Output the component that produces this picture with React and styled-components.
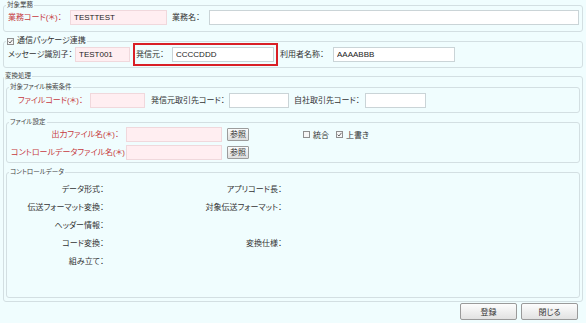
import styled, { createGlobalStyle } from "styled-components";

const GlobalStyle = createGlobalStyle`
  html, body { margin: 0; padding: 0; background: #f0fdfe; }
  body {
    font-family: "Liberation Sans", "Noto Sans CJK JP", sans-serif;
    font-size: 8px;
    color: #333;
    font-feature-settings: "palt";
  }
  * { box-sizing: border-box; }
`;

const controlRows = [
  ["データ形式：", "アプリコード長："],
  ["伝送フォーマット変換：", "対象伝送フォーマット："],
  ["ヘッダー情報：", ""],
  ["コード変換：", "変換仕様："],
  ["組み立て：", ""],
];

function Check({ checked }) {
  return (
    <Box>
      {checked && (
        <svg width="5" height="5" viewBox="0 0 5 5">
          <path d="M0.6 2.6 L2 4 L4.5 0.8" fill="none" stroke="#555" strokeWidth="0.9" />
        </svg>
      )}
    </Box>
  );
}

export default function App() {
  return (
    <Page>
      <GlobalStyle />
      <Group $pad="0 3px 6px 4px">
        <Legend>対象業務</Legend>
        <Row>
          <Label $w={62} $req>業務コード(＊)：</Label>
          <Field $w={97} $req readOnly value="TESTTEST" />
          <Label $w={37} $ml={5}>業務名：</Label>
          <Field readOnly value="" />
        </Row>
      </Group>

      <Group $mt={4} $pad="1px 3px 5px 4px">
        <Legend $big>
          <Check checked />
          通信パッケージ連携
        </Legend>
        <Row>
          <Label $w={67}>メッセージ識別子：</Label>
          <Field $w={55} $req readOnly value="TEST001" />
          <Highlight>
            <Label $w={36}>発信元：</Label>
            <Field $w={102} readOnly value="CCCCDDD" />
          </Highlight>
          <Label $w={53} $ml={2}>利用者名称：</Label>
          <Field $w={122} readOnly value="AAAABBB" />
        </Row>
      </Group>

      <Group $mt={3} $pad="1px 2px 3px 2px">
        <Legend>変換処理</Legend>

        <Group $pad="1px 3px 4px 4px">
          <Legend>対象ファイル検索条件</Legend>
          <Row>
            <Label $w={79} $right $req>ファイルコード(＊)：</Label>
            <Field $w={55} $req readOnly value="" />
            <Label $w={78} $ml={6}>発信元取引先コード：</Label>
            <Field $w={60} readOnly value="" />
            <Label $w={71} $ml={5}>自社取引先コード：</Label>
            <Field $w={61} readOnly value="" />
          </Row>
        </Group>

        <Group $mt={4} $pad="0 3px 2px 4px">
          <Legend>ファイル設定</Legend>
          <Stack>
            <Row>
              <Label $w={115} $right $req>出力ファイル名(＊)：</Label>
              <Field $w={96} $req readOnly value="" />
              <SmallButton>参照</SmallButton>
              <Options>
                <Option><Check />統合</Option>
                <Option><Check checked />上書き</Option>
              </Options>
            </Row>
            <Row>
              <Label $w={115} $right $req>コントロールデータファイル名(＊)：</Label>
              <Field $w={96} $req readOnly value="" />
              <SmallButton>参照</SmallButton>
            </Row>
          </Stack>
        </Group>

        <Group $mt={4} $pad="2px 3px 28px 4px">
          <Legend>コントロールデータ</Legend>
          <DataGrid>
            {controlRows.map(([a, b]) => [
              <GridLabel key={a}>{a}</GridLabel>,
              <span key={a + "-v1"} />,
              <GridLabel key={a + "-l2"}>{b}</GridLabel>,
              <span key={a + "-v2"} />,
            ])}
          </DataGrid>
        </Group>
      </Group>

      <Footer>
        <Button>登録</Button>
        <Button>閉じる</Button>
      </Footer>
    </Page>
  );
}

const Page = styled.div`
  width: 586px;
  height: 323px;
  padding: 0 3px;
  background: #f0fdfe;
  overflow: hidden;
`;

const Group = styled.fieldset`
  margin: ${(p) => p.$mt || 0}px 0 0;
  padding: ${(p) => p.$pad};
  border: 1px solid #d3dfe2;
  border-radius: 3px;
  min-width: 0;
`;

const Legend = styled.legend`
  display: flex;
  align-items: center;
  gap: 3px;
  margin-left: -2px;
  padding: 0 1px;
  font-size: ${(p) => (p.$big ? 8 : 6.5)}px;
  line-height: 10px;
  color: ${(p) => (p.$big ? "#333" : "#444")};
  white-space: nowrap;
`;

const Row = styled.div`
  display: flex;
  align-items: center;
  height: 15px;
`;

const Stack = styled.div`
  display: flex;
  flex-direction: column;
  gap: 3px;
`;

const Label = styled.span`
  flex: none;
  width: ${(p) => p.$w}px;
  margin-left: ${(p) => p.$ml || 0}px;
  padding-right: ${(p) => (p.$right ? 7 : 0)}px;
  text-align: ${(p) => (p.$right ? "right" : "left")};
  color: ${(p) => (p.$req ? "#c63a3e" : "#333")};
  line-height: 15px;
  white-space: nowrap;
`;

const Field = styled.input`
  flex: ${(p) => (p.$w ? "none" : "1")};
  width: ${(p) => (p.$w ? `${p.$w}px` : "auto")};
  min-width: 0;
  height: 15px;
  margin: 0;
  padding: 0 3px;
  border: 1px solid ${(p) => (p.$req ? "#f0d8dc" : "#cad4d7")};
  background: ${(p) => (p.$req ? "#ffeef1" : "#fff")};
  font: 8px "Liberation Sans", sans-serif;
  color: #222;
  outline: none;
`;

const Highlight = styled.div`
  display: flex;
  align-items: center;
  margin: -4px 0 -4px 3px;
  padding: 2px 2px 2px 1px;
  border: 2px solid #d91f26;
`;

const SmallButton = styled.button`
  flex: none;
  width: 22px;
  height: 13px;
  margin-left: 5px;
  padding: 0;
  border: 1px solid #9c9c9c;
  border-radius: 1px;
  background: linear-gradient(#fbfbfb, #dedede);
  font: 8px "Liberation Sans", "Noto Sans CJK JP", sans-serif;
  font-feature-settings: "palt";
  color: #333;
  line-height: 11px;
`;

const Options = styled.div`
  display: flex;
  align-items: center;
  gap: 7px;
  margin-left: 54px;
`;

const Option = styled.span`
  display: flex;
  align-items: center;
  gap: 3px;
`;

const Box = styled.span`
  flex: none;
  display: inline-flex;
  align-items: center;
  justify-content: center;
  width: 7px;
  height: 7px;
  border: 1px solid #8f8f8f;
  background: #f6f6f6;
`;

const DataGrid = styled.div`
  display: grid;
  grid-template-columns: 93px 88px 90px 1fr;
  grid-auto-rows: 18px;
  align-items: center;
`;

const GridLabel = styled.span`
  text-align: right;
  white-space: nowrap;
`;

const Footer = styled.div`
  display: flex;
  justify-content: flex-end;
  gap: 4px;
  margin-top: 1px;
  padding-right: 5px;
`;

const Button = styled.button`
  width: 57px;
  height: 17px;
  padding: 0;
  border: 1px solid #9a9a9a;
  border-radius: 2px;
  background: linear-gradient(#fdfdfd, #e2e2e2);
  font: 8px "Liberation Sans", "Noto Sans CJK JP", sans-serif;
  font-feature-settings: "palt";
  color: #333;
`;
